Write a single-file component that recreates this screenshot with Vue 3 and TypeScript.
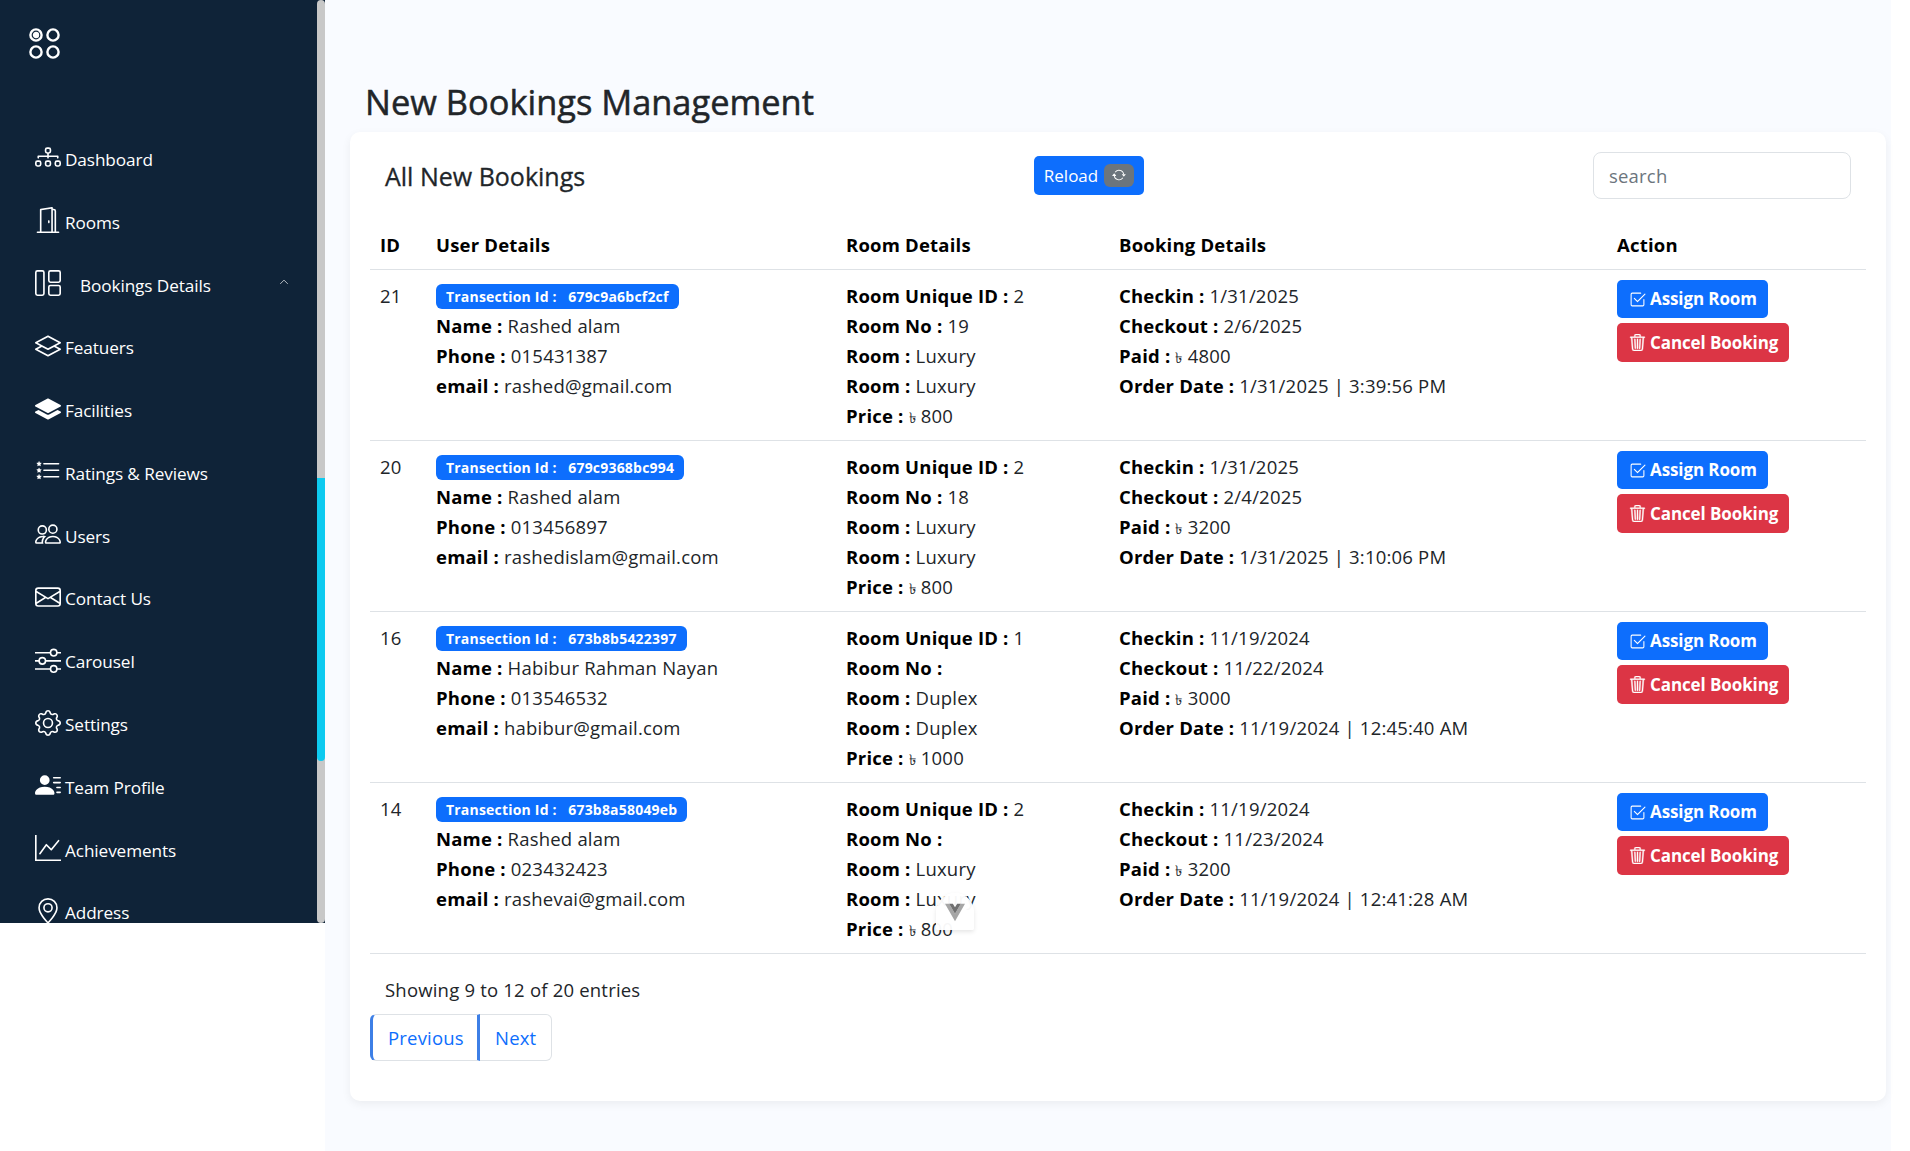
<template>
  <div class="page">
    <aside class="sidebar">
      <div class="side-scroll">
        <svg class="logo" viewBox="0 0 32 32" fill="none" stroke="#fff" stroke-width="2.4">
          <circle cx="7" cy="7" r="5.6" />
          <circle cx="7" cy="7" r="2" fill="#fff" />
          <circle cx="24" cy="7" r="5.6" />
          <circle cx="7" cy="24" r="5.6" />
          <circle cx="24" cy="24" r="5.6" />
        </svg>
        <nav class="menu">
          <a v-for="m in menu" :key="m.label" class="item" :class="{ sub: m.sub }">
            <svg class="ico" viewBox="0 0 16 16" fill="currentColor" v-html="m.icon"></svg>
            <span>{{ m.label }}</span>
            <svg v-if="m.sub" class="chev" viewBox="0 0 16 16" fill="none" stroke="currentColor" stroke-width="1.4">
              <path d="M2 11l6-6 6 6" />
            </svg>
          </a>
        </nav>
      </div>
      <div class="scrollbar"><div class="thumb"></div></div>
    </aside>

    <main class="main">
      <h1>New Bookings Management</h1>
      <section class="card">
        <div class="card-head">
          <h2>All New Bookings</h2>
          <button class="reload">
            Reload
            <span class="spin">
              <svg viewBox="0 0 16 16" fill="#fff"><path d="M11.534 7h3.932a.25.25 0 0 1 .192.41l-1.966 2.36a.25.25 0 0 1-.384 0l-1.966-2.36a.25.25 0 0 1 .192-.41zm-11 2h3.932a.25.25 0 0 0 .192-.41L2.692 6.23a.25.25 0 0 0-.384 0L.342 8.59A.25.25 0 0 0 .534 9z"/><path d="M8 3c-1.552 0-2.94.707-3.857 1.818a.5.5 0 1 1-.771-.636A6.002 6.002 0 0 1 13.917 7H12.9A5.002 5.002 0 0 0 8 3zM3.1 9a5.002 5.002 0 0 0 8.757 2.182.5.5 0 1 1 .771.636A6.002 6.002 0 0 1 2.083 9H3.1z"/></svg>
            </span>
          </button>
          <input class="search" placeholder="search" />
        </div>
        <table>
          <thead>
            <tr>
              <th class="c-id">ID</th>
              <th class="c-user">User Details</th>
              <th class="c-room">Room Details</th>
              <th class="c-book">Booking Details</th>
              <th>Action</th>
            </tr>
          </thead>
          <tbody>
            <tr v-for="b in bookings" :key="b.id">
              <td>{{ b.id }}</td>
              <td>
                <span class="badge">Transection Id :&nbsp;&nbsp; {{ b.trx }}</span>
                <div><b>Name : </b>{{ b.name }}</div>
                <div><b>Phone : </b>{{ b.phone }}</div>
                <div><b>email : </b>{{ b.email }}</div>
              </td>
              <td>
                <div><b>Room Unique ID : </b>{{ b.uid }}</div>
                <div><b>Room No : </b>{{ b.no }}</div>
                <div><b>Room : </b>{{ b.room }}</div>
                <div><b>Room : </b>{{ b.room }}</div>
                <div><b>Price : </b><span class="taka">৳</span> {{ b.price }}</div>
              </td>
              <td>
                <div><b>Checkin : </b>{{ b.checkin }}</div>
                <div><b>Checkout : </b>{{ b.checkout }}</div>
                <div><b>Paid : </b><span class="taka">৳</span> {{ b.paid }}</div>
                <div><b>Order Date : </b>{{ b.order }}</div>
              </td>
              <td class="actions">
                <button class="act assign">
                  <svg viewBox="0 0 16 16" fill="currentColor"><path d="M3 14.5A1.5 1.5 0 0 1 1.5 13V3A1.5 1.5 0 0 1 3 1.5h8a.5.5 0 0 1 0 1H3a.5.5 0 0 0-.5.5v10a.5.5 0 0 0 .5.5h10a.5.5 0 0 0 .5-.5V8a.5.5 0 0 1 1 0v5a1.5 1.5 0 0 1-1.5 1.5H3z"/><path d="m8.354 10.354 7-7a.5.5 0 0 0-.708-.708L8 9.293 5.354 6.646a.5.5 0 1 0-.708.708l3 3a.5.5 0 0 0 .708 0z"/></svg>
                  Assign Room
                </button>
                <button class="act cancel">
                  <svg viewBox="0 0 16 16" fill="currentColor" stroke="currentColor" stroke-width="0.4"><path d="M6.5 1h3a.5.5 0 0 1 .5.5v1H6v-1a.5.5 0 0 1 .5-.5M11 2.5v-1A1.5 1.5 0 0 0 9.5 0h-3A1.5 1.5 0 0 0 5 1.5v1H1.5a.5.5 0 0 0 0 1h.538l.853 10.66A2 2 0 0 0 4.885 16h6.23a2 2 0 0 0 1.994-1.84l.853-10.66h.538a.5.5 0 0 0 0-1zm1.958 1-.846 10.58a1 1 0 0 1-.997.92h-6.23a1 1 0 0 1-.997-.92L3.042 3.5zm-7.487 1a.5.5 0 0 1 .528.47l.5 8.5a.5.5 0 0 1-.998.06L5 5.03a.5.5 0 0 1 .47-.53Zm5.058 0a.5.5 0 0 1 .47.53l-.5 8.5a.5.5 0 1 1-.998-.06l.5-8.5a.5.5 0 0 1 .528-.47M8 4.5a.5.5 0 0 1 .5.5v8.5a.5.5 0 0 1-1 0V5a.5.5 0 0 1 .5-.5"/></svg>
                  Cancel Booking
                </button>
              </td>
            </tr>
          </tbody>
        </table>
        <p class="info">Showing 9 to 12 of 20 entries</p>
        <div class="pager">
          <a class="prev">Previous</a>
          <a class="next">Next</a>
        </div>
        <div class="float-down">
          <svg viewBox="0 0 24 24">
            <polygon points="0,2 12,23 24,2 19,2 12,14 5,2" fill="#a6a6a6" />
            <polygon points="5,2 12,14 19,2 14.6,2 12,6.400 9.400,2" fill="#707070" />
          </svg>
        </div>
      </section>
    </main>
  </div>
</template>

<script setup lang="ts">
interface MenuItem {
  label: string
  icon: string
  sub?: boolean
}

interface Booking {
  id: number
  trx: string
  name: string
  phone: string
  email: string
  uid: number
  no: string
  room: string
  price: number
  checkin: string
  checkout: string
  paid: number
  order: string
}

const starPath = 'a.27.27 0 0 1 .516 0l.162.53c.035.115.14.194.258.194h.551c.259 0 .37.333.164.493l-.468.363a.277.277 0 0 0-.094.3l.173.569c.078.256-.213.462-.423.3l-.417-.324a.267.267 0 0 0-.328 0l-.417.323c-.21.163-.5-.043-.423-.299l.173-.57a.277.277 0 0 0-.094-.299l-.468-.363c-.206-.16-.095-.493.164-.493h.55a.271.271 0 0 0 .259-.194l.162-.53z'

const menu: MenuItem[] = [
  { label: 'Dashboard', icon: '<path fill-rule="evenodd" d="M6 3.5A1.5 1.5 0 0 1 7.5 2h1A1.5 1.5 0 0 1 10 3.5v1A1.5 1.5 0 0 1 8.5 6v1H14a.5.5 0 0 1 .5.5v1a.5.5 0 0 1-1 0V8h-5v.5a.5.5 0 0 1-1 0V8h-5v.5a.5.5 0 0 1-1 0v-1A.5.5 0 0 1 2 7h5.5V6A1.5 1.5 0 0 1 6 4.5v-1zM8.5 5a.5.5 0 0 0 .5-.5v-1a.5.5 0 0 0-.5-.5h-1a.5.5 0 0 0-.5.5v1a.5.5 0 0 0 .5.5h1zM0 11.5A1.5 1.5 0 0 1 1.5 10h1A1.5 1.5 0 0 1 4 11.5v1A1.5 1.5 0 0 1 2.5 14h-1A1.5 1.5 0 0 1 0 12.5v-1zm1.5-.5a.5.5 0 0 0-.5.5v1a.5.5 0 0 0 .5.5h1a.5.5 0 0 0 .5-.5v-1a.5.5 0 0 0-.5-.5h-1zm4.5.5A1.5 1.5 0 0 1 7.5 10h1a1.5 1.5 0 0 1 1.5 1.5v1A1.5 1.5 0 0 1 8.5 14h-1A1.5 1.5 0 0 1 6 12.5v-1zm1.5-.5a.5.5 0 0 0-.5.5v1a.5.5 0 0 0 .5.5h1a.5.5 0 0 0 .5-.5v-1a.5.5 0 0 0-.5-.5h-1zm4.5.5a1.5 1.5 0 0 1 1.5-1.5h1a1.5 1.5 0 0 1 1.5 1.5v1a1.5 1.5 0 0 1-1.5 1.5h-1a1.5 1.5 0 0 1-1.5-1.5v-1zm1.500-.5a.5.5 0 0 0-.5.5v1a.5.5 0 0 0 .5.5h1a.5.5 0 0 0 .5-.5v-1a.5.5 0 0 0-.5-.5h-1z"/>' },
  { label: 'Rooms', icon: '<path d="M8.500 10c-.276 0-.5-.448-.5-1s.224-1 .5-1 .5.448.5 1-.224 1-.5 1z"/><path d="M10.828.122A.5.5 0 0 1 11 .500V1h.5A1.500 1.500 0 0 1 13 2.500V15h1.500a.5.5 0 0 1 0 1h-13a.5.5 0 0 1 0-1H3V1.500a.5.5 0 0 1 .43-.495l7-1a.5.5 0 0 1 .398.117zM11.500 2H11v13h1V2.500a.5.5 0 0 0-.5-.500zM4 1.934V15h6V1.077l-6 .857z"/>' },
  { label: 'Bookings Details', sub: true, icon: '<path d="M0 1.500A1.500 1.500 0 0 1 1.500 0h3A1.500 1.500 0 0 1 6 1.500v13A1.500 1.500 0 0 1 4.500 16h-3A1.500 1.500 0 0 1 0 14.500zM1.500 1a.5.5 0 0 0-.5.500v13a.5.5 0 0 0 .5.500h3a.5.5 0 0 0 .5-.500v-13a.5.5 0 0 0-.5-.500zM8 1.500A1.500 1.500 0 0 1 9.500 0h5A1.500 1.500 0 0 1 16 1.500v5A1.500 1.500 0 0 1 14.500 8h-5A1.500 1.500 0 0 1 8 6.500zM9.500 1a.5.5 0 0 0-.5.500v5a.5.5 0 0 0 .5.500h5a.5.5 0 0 0 .5-.500v-5a.5.5 0 0 0-.5-.500zM8 10.500A1.500 1.500 0 0 1 9.500 9h5a1.500 1.500 0 0 1 1.500 1.500v4a1.500 1.500 0 0 1-1.500 1.500h-5A1.500 1.500 0 0 1 8 14.500zM9.500 10a.5.5 0 0 0-.5.500v4a.5.5 0 0 0 .5.500h5a.5.5 0 0 0 .5-.500v-4a.5.5 0 0 0-.5-.500z"/>' },
  { label: 'Featuers', icon: '<path d="M8.235 1.559a.5.5 0 0 0-.47 0l-7.500 4a.5.5 0 0 0 0 .882L3.188 8 .264 9.559a.5.5 0 0 0 0 .882l7.500 4a.5.5 0 0 0 .47 0l7.500-4a.5.5 0 0 0 0-.882L12.813 8l2.922-1.559a.5.5 0 0 0 0-.882zm3.515 7.008L14.438 10 8 13.433 1.562 10 4.250 8.567l3.515 1.874a.5.5 0 0 0 .47 0zM8 9.433 1.562 6 8 2.567 14.438 6z"/>' },
  { label: 'Facilities', icon: '<path d="M7.765 1.559a.5.5 0 0 1 .47 0l7.500 4a.5.5 0 0 1 0 .882l-7.500 4a.5.5 0 0 1-.47 0l-7.500-4a.5.5 0 0 1 0-.882z"/><path d="m2.125 8.567-1.860.992a.5.5 0 0 0 0 .882l7.500 4a.5.5 0 0 0 .47 0l7.500-4a.5.5 0 0 0 0-.882l-1.860-.992-5.170 2.756a1.500 1.500 0 0 1-1.410 0z"/>' },
  { label: 'Ratings & Reviews', icon: `<path fill-rule="evenodd" d="M5 11.500a.5.5 0 0 1 .5-.5h9a.5.5 0 0 1 0 1h-9a.5.5 0 0 1-.5-.500zm0-4a.5.5 0 0 1 .5-.5h9a.5.5 0 0 1 0 1h-9a.5.5 0 0 1-.5-.500zm0-4a.5.5 0 0 1 .5-.5h9a.5.5 0 0 1 0 1h-9a.5.5 0 0 1-.5-.500z"/><path d="M2.242 2.194${starPath}"/><path d="M2.242 6.194${starPath}"/><path d="M2.242 10.194${starPath}"/>` },
  { label: 'Users', icon: '<path d="M15 14s1 0 1-1-1-4-5-4-5 3-5 4 1 1 1 1zm-7.978-1L7 12.996c.001-.264.167-1.030.760-1.720C8.312 10.629 9.282 10 11 10c1.717 0 2.687.630 3.240 1.276.593.690.758 1.457.760 1.720l-.008.002-.014.002zM11 7a2 2 0 1 0 0-4 2 2 0 0 0 0 4m3-2a3 3 0 1 1-6 0 3 3 0 0 1 6 0M6.936 9.280a6 6 0 0 0-1.230-.247A7 7 0 0 0 5 9c-4 0-5 3-5 4q0 1 1 1h4.216A2.200 2.200 0 0 1 5 13c0-1.010.377-2.042 1.090-2.904.243-.294.526-.569.846-.816M4.920 10A5.500 5.500 0 0 0 4 13H1c0-.260.164-1.030.760-1.724.545-.636 1.492-1.256 3.160-1.275ZM1.500 5.500a3 3 0 1 1 6 0 3 3 0 0 1-6 0m3-2a2 2 0 1 0 0 4 2 2 0 0 0 0-4"/>' },
  { label: 'Contact Us', icon: '<path d="M0 4a2 2 0 0 1 2-2h12a2 2 0 0 1 2 2v8a2 2 0 0 1-2 2H2a2 2 0 0 1-2-2zm2-1a1 1 0 0 0-1 1v.217l7 4.200 7-4.200V4a1 1 0 0 0-1-1zm13 2.383-4.708 2.825L15 11.105zm-.034 6.876-5.640-3.471L8 9.583l-1.326-.795-5.640 3.470A1 1 0 0 0 2 13h12a1 1 0 0 0 .966-.741M1 11.105l4.708-2.897L1 5.383z"/>' },
  { label: 'Carousel', icon: '<path fill-rule="evenodd" d="M11.500 2a1.500 1.500 0 1 0 0 3 1.500 1.500 0 0 0 0-3M9.050 3a2.500 2.500 0 0 1 4.900 0H16v1h-2.050a2.500 2.500 0 0 1-4.900 0H0V3zM4.500 7a1.500 1.500 0 1 0 0 3 1.500 1.500 0 0 0 0-3M2.050 8a2.500 2.500 0 0 1 4.900 0H16v1H6.950a2.500 2.500 0 0 1-4.900 0H0V8zm9.450 4a1.500 1.500 0 1 0 0 3 1.500 1.500 0 0 0 0-3m-2.450 1a2.500 2.500 0 0 1 4.900 0H16v1h-2.050a2.500 2.500 0 0 1-4.900 0H0v-1z"/>' },
  { label: 'Settings', icon: '<path d="M8 4.754a3.246 3.246 0 1 0 0 6.492 3.246 3.246 0 0 0 0-6.492M5.754 8a2.246 2.246 0 1 1 4.492 0 2.246 2.246 0 0 1-4.492 0"/><path d="M9.796 1.343c-.527-1.790-3.065-1.790-3.592 0l-.094.319a.873.873 0 0 1-1.255.520l-.292-.160c-1.640-.892-3.433.902-2.540 2.541l.159.292a.873.873 0 0 1-.520 1.255l-.319.094c-1.790.527-1.790 3.065 0 3.592l.319.094a.873.873 0 0 1 .520 1.255l-.160.292c-.892 1.640.901 3.434 2.541 2.540l.292-.159a.873.873 0 0 1 1.255.520l.094.319c.527 1.790 3.065 1.790 3.592 0l.094-.319a.873.873 0 0 1 1.255-.520l.292.160c1.640.893 3.434-.902 2.540-2.541l-.159-.292a.873.873 0 0 1 .520-1.255l.319-.094c1.790-.527 1.790-3.065 0-3.592l-.319-.094a.873.873 0 0 1-.520-1.255l.160-.292c.893-1.640-.902-3.433-2.541-2.540l-.292.159a.873.873 0 0 1-1.255-.520zm-2.633.283c.246-.835 1.428-.835 1.674 0l.094.319a1.873 1.873 0 0 0 2.693 1.115l.291-.160c.764-.415 1.600.420 1.184 1.185l-.159.292a1.873 1.873 0 0 0 1.116 2.692l.318.094c.835.246.835 1.428 0 1.674l-.319.094a1.873 1.873 0 0 0-1.115 2.693l.160.291c.415.764-.420 1.600-1.185 1.184l-.291-.159a1.873 1.873 0 0 0-2.693 1.116l-.094.318c-.246.835-1.428.835-1.674 0l-.094-.319a1.873 1.873 0 0 0-2.692-1.115l-.292.160c-.764.415-1.600-.420-1.184-1.185l.159-.291A1.873 1.873 0 0 0 1.945 8.930l-.319-.094c-.835-.246-.835-1.428 0-1.674l.319-.094A1.873 1.873 0 0 0 3.060 4.377l-.160-.292c-.415-.764.420-1.600 1.185-1.184l.292.159a1.873 1.873 0 0 0 2.692-1.115z"/>' },
  { label: 'Team Profile', icon: '<path d="M6 8a3 3 0 1 0 0-6 3 3 0 0 0 0 6m-5 6s-1 0-1-1 1-4 6-4 6 3 6 4-1 1-1 1zM11 3.500a.5.5 0 0 1 .5-.5h4a.5.5 0 0 1 0 1h-4a.5.5 0 0 1-.5-.500m.5 2.500a.5.5 0 0 0 0 1h4a.5.5 0 0 0 0-1zm2 3a.5.5 0 0 0 0 1h2a.5.5 0 0 0 0-1zm0 3a.5.5 0 0 0 0 1h2a.5.5 0 0 0 0-1z"/>' },
  { label: 'Achievements', icon: '<path fill-rule="evenodd" d="M0 0h1v15h15v1H0zm14.817 3.113a.5.5 0 0 1 .07.704l-4.500 5.500a.5.5 0 0 1-.74.037L7.060 6.767l-3.656 5.027a.5.5 0 0 1-.808-.588l4-5.500a.5.5 0 0 1 .758-.060l2.609 2.610 4.150-5.073a.5.5 0 0 1 .704-.070"/>' },
  { label: 'Address', icon: '<path d="M12.166 8.940c-.524 1.062-1.234 2.120-1.960 3.070A32 32 0 0 1 8 14.580a32 32 0 0 1-2.206-2.570c-.726-.950-1.436-2.008-1.960-3.070C3.304 7.867 3 6.862 3 6a5 5 0 0 1 10 0c0 .862-.305 1.867-.834 2.940M8 16s6-5.686 6-10A6 6 0 0 0 2 6c0 4.314 6 10 6 10"/><path d="M8 8a2 2 0 1 1 0-4 2 2 0 0 1 0 4m0 1a3 3 0 1 0 0-6 3 3 0 0 0 0 6"/>' }
]

const bookings: Booking[] = [
  { id: 21, trx: '679c9a6bcf2cf', name: 'Rashed alam', phone: '015431387', email: 'rashed@gmail.com', uid: 2, no: '19', room: 'Luxury', price: 800, checkin: '1/31/2025', checkout: '2/6/2025', paid: 4800, order: '1/31/2025 | 3:39:56 PM' },
  { id: 20, trx: '679c9368bc994', name: 'Rashed alam', phone: '013456897', email: 'rashedislam@gmail.com', uid: 2, no: '18', room: 'Luxury', price: 800, checkin: '1/31/2025', checkout: '2/4/2025', paid: 3200, order: '1/31/2025 | 3:10:06 PM' },
  { id: 16, trx: '673b8b5422397', name: 'Habibur Rahman Nayan', phone: '013546532', email: 'habibur@gmail.com', uid: 1, no: '', room: 'Duplex', price: 1000, checkin: '11/19/2024', checkout: '11/22/2024', paid: 3000, order: '11/19/2024 | 12:45:40 AM' },
  { id: 14, trx: '673b8a58049eb', name: 'Rashed alam', phone: '023432423', email: 'rashevai@gmail.com', uid: 2, no: '', room: 'Luxury', price: 800, checkin: '11/19/2024', checkout: '11/23/2024', paid: 3200, order: '11/19/2024 | 12:41:28 AM' }
]
</script>

<style>
html,
body {
  margin: 0;
  background: #fff;
}
</style>

<style scoped>
.page {
  display: flex;
  height: 1151px;
  overflow: hidden;
  font-family: "Open Sans", "DejaVu Sans", sans-serif;
  font-size: 18.5px;
  letter-spacing: 0.2px;
  color: #212529;
}

.sidebar {
  width: 325px;
  height: 923px;
  flex: none;
  display: flex;
  background: #0f2338;
  color: #fff;
}

.side-scroll {
  flex: 1;
  overflow: hidden;
}

.logo {
  display: block;
  width: 32px;
  height: 32px;
  margin: 28px 0 0 29px;
}

.menu {
  margin-top: 68px;
}

.item {
  height: 62.8px;
  display: flex;
  align-items: center;
  padding-left: 35px;
  font-size: 17.2px;
  letter-spacing: -0.1px;
  gap: 4px;
  position: relative;
}

.item.sub span {
  margin: 2px 0 0 15px;
}

.ico {
  width: 26px;
  height: 26px;
  flex: none;
  margin-top: -4px;
}

.chev {
  position: absolute;
  left: 279px;
  top: 23px;
  width: 10px;
  height: 10px;
  opacity: 0.8;
}

.scrollbar {
  width: 8px;
  height: 100%;
  background: #c8c8c8;
  border-radius: 4px;
  padding-top: 478px;
  box-sizing: border-box;
}

.thumb {
  height: 283px;
  background: #0dcaf0;
  border-radius: 0 0 4px 4px;
}

.main {
  width: 1566px;
  flex: none;
  box-sizing: border-box;
  background: #f9fbff;
  padding: 75px 5px 0 25px;
}

h1 {
  margin: 0 0 3px 15px;
  font-size: 34.4px;
  line-height: 54px;
  font-weight: 400;
  letter-spacing: 0;
  -webkit-text-stroke: 0.5px #212529;
}

.card {
  position: relative;
  background: #fff;
  border-radius: 10px;
  height: 969px;
  padding: 0 20px;
  box-shadow: 0 3px 10px rgba(0, 0, 0, 0.06);
}

.card-head {
  display: flex;
  align-items: center;
  height: 87px;
  padding: 0 15px;
}

h2 {
  width: 649px;
  margin: 0;
  font-size: 25px;
  font-weight: 400;
  letter-spacing: 0;
  -webkit-text-stroke: 0.3px #212529;
}

.reload {
  height: 39px;
  width: 110px;
  border: 0;
  border-radius: 5px;
  background: #0d6efd;
  color: #fff;
  font: inherit;
  font-size: 17px;
  letter-spacing: 0;
  display: flex;
  align-items: center;
  justify-content: center;
  gap: 6px;
  padding: 0;
  margin-top: -1px;
}

.spin {
  width: 30px;
  height: 23px;
  background: #6c757d;
  border-radius: 6px;
  display: flex;
  align-items: center;
  justify-content: center;
}

.spin svg {
  width: 14px;
  height: 14px;
}

.search {
  width: 258px;
  height: 47px;
  box-sizing: border-box;
  margin: -1px 0 0 auto;
  border: 1px solid #dee2e6;
  border-radius: 8px;
  padding: 0 15px;
  font: inherit;
  letter-spacing: 0.2px;
}

.search::placeholder {
  color: #6c757d;
}

table {
  width: 100%;
  border-collapse: collapse;
  table-layout: fixed;
}

th {
  text-align: left;
  color: #000;
  font-weight: 700;
  height: 50px;
  padding: 0 10px;
}

td {
  vertical-align: top;
  padding: 11px 10px 0;
  height: 159px;
  line-height: 30px;
  color: #212529;
}

tr {
  border-bottom: 1px solid #dee2e6;
}

.c-id {
  width: 36px;
}

.c-user {
  width: 390px;
}

.c-room {
  width: 253px;
}

.c-book {
  width: 478px;
}

b {
  color: #000;
}

.taka {
  font-size: 15px;
  line-height: 1;
}

.badge {
  display: inline-block;
  background: #0d6efd;
  color: #fff;
  font-size: 14px;
  font-weight: 700;
  line-height: 25px;
  padding: 0 10px;
  border-radius: 6px;
  vertical-align: top;
  margin: 3px 0 2px;
  letter-spacing: 0.2px;
}

.act {
  display: flex;
  align-items: center;
  gap: 4px;
  height: 38px;
  border: 0;
  border-radius: 5px;
  color: #fff;
  font: inherit;
  font-size: 17px;
  font-weight: 700;
  letter-spacing: -0.1px;
  padding: 0 11px 0 12px;
  margin: -1px 0 6px;
}

.act svg {
  width: 17px;
  height: 17px;
}

.assign {
  background: #0d6efd;
}

.cancel {
  background: #dc3545;
  height: 39px;
}

.info {
  margin: 21px 0 0 15px;
  line-height: 30px;
}

.pager {
  display: flex;
  margin-top: 9px;
  height: 47px;
}

.pager a {
  display: flex;
  align-items: center;
  box-sizing: border-box;
  color: #0d6efd;
  border: 1px solid #dee2e6;
  background: #fff;
}

.prev {
  width: 110px;
  padding-left: 15px;
  border-radius: 6px 0 0 6px;
  border-left: 3px solid #3d7fe6 !important;
  border-right: 3px solid #3d7fe6 !important;
}

.next {
  width: 72px;
  padding-left: 15px;
  border-radius: 0 6px 6px 0;
  border-left: 0 !important;
}

.float-down {
  position: absolute;
  left: 586px;
  top: 761px;
  width: 38px;
  height: 37px;
  background: rgba(255, 255, 255, 0.96);
  border-radius: 19px 19px 2px 2px;
  box-shadow: 0 2px 4px rgba(0, 0, 0, 0.1);
  display: flex;
  align-items: center;
  justify-content: center;
}

.float-down svg {
  width: 20px;
  height: 20px;
  margin: 0 0 0 -1px;
}
</style>
